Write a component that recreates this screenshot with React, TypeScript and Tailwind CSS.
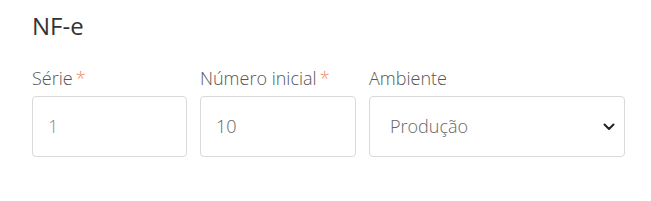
import React from "react";

export default function App() {
  return (
    <div className="w-[651px] h-[201px] bg-white pl-[32px] pt-[10px]" style={{ fontFamily: '"Open Sans", sans-serif' }}>
      <h2 className="text-[24px] leading-[32px] text-[#333]">NF-e</h2>
      <div className="mt-[24px] flex gap-[13px]">
        <div className="w-[155px] shrink-0 flex flex-col">
          <label className="text-[18px] leading-[24px] text-[#555] font-light h-[30px]">
            Série<span className="text-[#f4845f] ml-[3px]">*</span>
          </label>
          <div className="h-[61px] border border-[#d9d9d9] rounded-[4px] flex items-center px-[15px] text-[18px] font-light text-[#888]">1</div>
        </div>
        <div className="w-[156px] shrink-0 flex flex-col">
          <label className="text-[18px] leading-[24px] text-[#555] font-light h-[30px]">
            Número inicial<span className="text-[#f4845f] ml-[3px]">*</span>
          </label>
          <div className="h-[61px] border border-[#d9d9d9] rounded-[4px] flex items-center px-[15px] text-[18px] font-light text-[#666]">10</div>
        </div>
        <div className="w-[256px] shrink-0 flex flex-col">
          <label className="text-[18px] leading-[24px] text-[#555] font-light h-[30px]">Ambiente</label>
          <div className="h-[61px] border border-[#d9d9d9] rounded-[4px] flex items-center justify-between pl-[20px] pr-[9px] text-[18px] font-light text-[#666]">
            <span>Produção</span>
            <svg width="12" height="8" viewBox="0 0 12 8" fill="none">
              <path d="M1.5 1.5 L6 6 L10.5 1.5" stroke="#222" strokeWidth="2" strokeLinecap="round" strokeLinejoin="round" />
            </svg>
          </div>
        </div>
      </div>
    </div>
  );
}
